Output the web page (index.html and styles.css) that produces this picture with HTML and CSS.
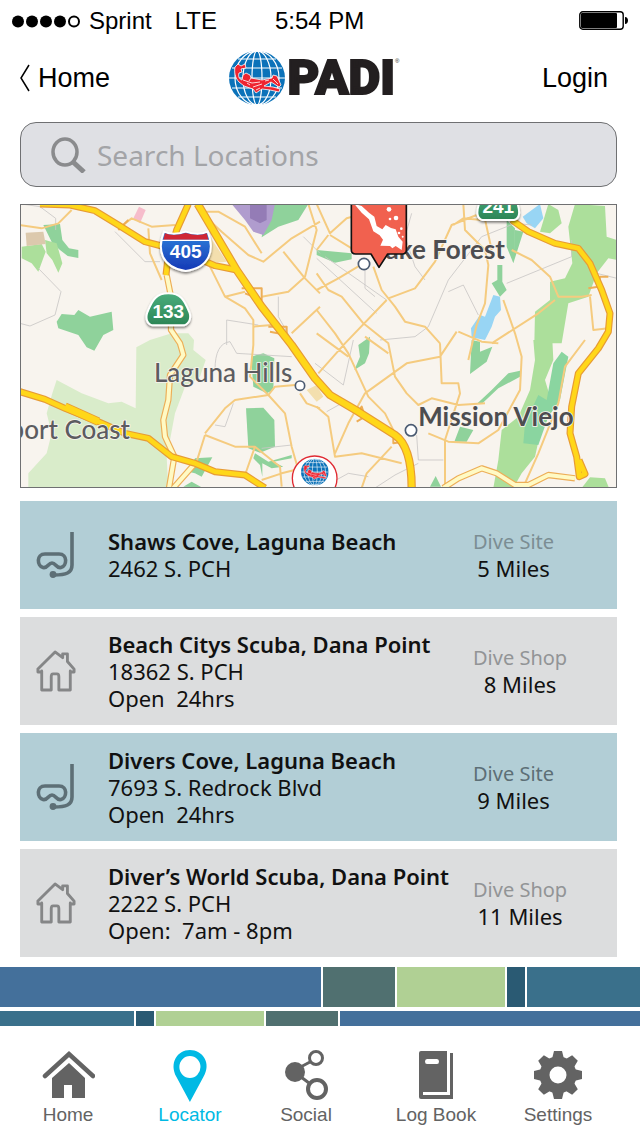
FILE: index.html
```html
<!DOCTYPE html>
<html lang="en">
<head>
<meta charset="utf-8">
<meta name="viewport" content="width=device-width, initial-scale=1">
<title>PADI Locator</title>
<link rel="stylesheet" href="styles.css">
</head>
<body>
<svg class="defs" aria-hidden="true">
  <defs>
    <symbol id="globe" viewBox="0 0 56 54">
      <ellipse cx="28" cy="27" rx="28" ry="27" fill="#0b72b9"/>
      <g fill="none" stroke="#fff" stroke-width="1.2">
        <ellipse cx="28" cy="27" rx="22" ry="27"/><ellipse cx="28" cy="27" rx="14" ry="27"/><ellipse cx="28" cy="27" rx="5" ry="27"/>
        <path d="M9 8H47M3 17H53M0 27H56M3 37H53M9 46H47"/>
      </g>
      <path d="M6 16L9 13L12 15L16 13L17 17L12 18L13 21L10 22C9 25 10 28 13 29L14 24L17 22L21 24L22 27L33 29L43 27L44 24L48 25L52 34L50 36L42 31L35 35L44 36L51 38L50 41L41 39L33 38L27 42L24 38L15 35L10 31C6 27 5 21 6 16Z" fill="#ee2430" stroke="#fff" stroke-width=".8"/>
      <path d="M14 29L23 32L31 31M18 32L21 34M24 36L33 33M22 27L20 30M44 28L49 33M27 39L31 37M36 30L40 29" fill="none" stroke="#fff" stroke-width=".8"/>
    </symbol>
    <symbol id="snorkel" viewBox="0 0 40 46">
      <g fill="none" stroke="currentColor" stroke-width="3.600">
        <path d="M36 0V33C36 41 30 43 18 43"/>
        <path d="M9 22H23C32 22 31 34 25 35.500C20 36.500 20 31 16 31S12 36.500 7 35.500C1 34 0 22 9 22Z"/>
      </g>
      <circle cx="17" cy="42.500" r="3.400" fill="currentColor"/>
    </symbol>
    <symbol id="shop" viewBox="0 0 42 44">
      <path d="M6 22V42H16V28Q16 25 18 25H22Q24 25 24 28V42H36V22M2 20L20 2L28 8V4H33V12L40 20V23H36M2 20V23H6" fill="none" stroke="currentColor" stroke-width="3" stroke-linejoin="round" stroke-linecap="round"/>
    </symbol>
  </defs>
</svg>

<div class="status">
  <svg class="signal" viewBox="0 0 68 13" aria-hidden="true">
    <g><circle cx="6" cy="6.500" r="6"/><circle cx="20" cy="6.500" r="6"/><circle cx="34" cy="6.500" r="6"/><circle cx="48" cy="6.500" r="6"/></g>
    <circle cx="62" cy="6.500" r="5" fill="none" stroke="#000" stroke-width="2"/>
  </svg>
  <span class="carrier">Sprint</span>
  <span class="network">LTE</span>
  <span class="clock">5:54 PM</span>
  <svg class="battery" viewBox="0 0 49 20" aria-label="Battery">
    <rect x=".8" y=".8" width="43.400" height="17.400" rx="3" fill="none" stroke="#000" stroke-width="1.400"/>
    <rect x="2" y="2" width="36" height="15" rx="1"/><path d="M46 6C50 6 50 13 46 13Z"/>
  </svg>
</div>

<header class="header">
  <a class="back" href="#home">
    <svg viewBox="0 0 10 28" aria-hidden="true"><path d="M9 1L1 14L9 27" fill="none" stroke="#000" stroke-width="1.500"/></svg>Home</a>
  <a class="brand" href="#padi"><svg class="brand-globe" aria-hidden="true"><use href="#globe"/></svg><span class="brand-name">PADI</span><span class="reg">®</span></a>
  <a class="login" href="#login">Login</a>
</header>

<main class="content">
  <form class="search">
    <svg viewBox="0 0 36 36" aria-hidden="true"><ellipse cx="14" cy="15" rx="12" ry="13" fill="none" stroke="#8a8b8d" stroke-width="3.500"/><path d="M21 24L33 35" stroke="#8a8b8d" stroke-width="5"/></svg>
    <input type="search" placeholder="Search Locations" aria-label="Search Locations">
  </form>

  <svg class="map" viewBox="18 15 1785 846" role="img" aria-label="Map of dive locations">
    <defs>
      <linearGradient id="blueShield" x2="0" y2="1"><stop stop-color="#2f83dc"/><stop offset="1" stop-color="#1537b5"/></linearGradient>
      <linearGradient id="greenShield" x2="0" y2="1"><stop stop-color="#4aad7c"/><stop offset="1" stop-color="#2c8556"/></linearGradient>
      <filter id="shadow" x="-20%" y="-20%" width="140%" height="150%"><feDropShadow dx="0" dy="5" stdDeviation="3" flood-opacity=".5"/></filter>
    </defs>
    <rect x="0" y="0" width="1820" height="880" fill="#f8f4ee"/>

    <!-- parks -->
    <path d="M364 442L405 420L470 400L520 400L537 420L535 450L572 480L555 530L510 560L480 640L465 720L455 770L460 870H40V820L95 760L110 700L95 640L112 580L125 540L200 580L280 610L320 605L362 625Z" fill="#d9ecca"/>
    <g fill="#8fd29b">
      <path d="M85 75L135 72L142 120L162 145L190 150V174L158 168L135 150L112 130Z"/>
      <path d="M125 365L140 342L178 345L190 330L225 350L290 335L295 390L265 405L238 452L215 442L190 405L130 385Z"/>
      <path d="M708 470L745 460L778 475L775 570L755 580L715 560Z"/>
      <path d="M693 625L745 623L778 660L780 740L735 758L700 745Z"/>
      <path d="M720 760L760 785L830 765V775L775 785L805 800L770 805L742 790V830L735 795L715 775ZM540 775L592 772L560 830L540 820L520 815ZM505 860L530 845L560 862Z"/>
      <path d="M760 12H880L850 60L790 80L740 112L748 60Z"/>
      <path d="M905 150L1010 160V178L960 188L905 165ZM1030 435L1065 410L1062 460L1050 490L1018 510L1035 470Z"/>
      <path d="M1475 60L1500 85L1495 190L1475 140ZM1500 90L1525 95L1495 190ZM1447 195H1462V245L1475 270L1455 290L1430 250L1447 240Z"/>
      <path d="M1370 420L1395 425V455L1432 440L1415 485L1365 522Z"/>
      <path d="M1385 612L1430 570L1480 520L1515 512V530L1450 565L1400 612ZM1335 680L1375 690L1355 725L1318 725ZM1245 860L1262 828L1278 860Z"/>
    </g>
    <g fill="#acdf9b">
      <path d="M20 140L80 132L92 155L70 215L50 190L20 175Z"/><path d="M90 120L125 130L142 190L130 218L112 180L95 160Z"/>
      <path d="M1680 12L1770 18L1775 110L1806 120V180L1780 175L1745 220L1720 290L1660 310L1640 430H1558L1560 335L1605 300V245L1650 235L1672 190L1660 80Z"/>
      <path d="M1600 12L1630 30L1640 70L1605 100L1575 95Z"/>
      <path d="M1555 420H1612L1615 480L1590 540L1605 590L1580 680L1560 770L1520 820L1495 864H1435L1450 780L1460 690L1510 650L1545 570L1560 480Z"/>
      <path d="M1700 864L1725 832L1770 835L1782 864Z"/>
    </g>
    <path d="M1615 490L1640 455L1660 470L1635 600L1600 650L1570 735L1525 730L1530 670L1570 585L1595 600Z" fill="#8ad5a0"/>
    <path d="M650 12H780L770 60L745 105L715 95L690 60Z" fill="#b09cce"/><path d="M705 12H755V60L735 70L705 55Z" fill="#947cb6"/>
    <path d="M32 98L85 95L92 132L35 138Z" fill="#dcc9ad"/><path d="M372 20L392 30L375 70L355 55Z" fill="#f6bccb"/>
    <path d="M585 110L635 185L580 190ZM875 570L905 555L925 590L905 605Z" fill="#f3dfae"/>
    <g fill="#98d5f4"><path d="M1523 50L1575 12L1585 55L1560 85L1535 70Z"/><path d="M1435 285L1455 290L1458 330L1440 350L1430 380L1410 420L1370 412L1368 385L1395 345L1410 350Z"/></g>

    <!-- local streets -->
    <g fill="none" stroke="#c9c7c5" stroke-width="2.500">
      <path d="M20 12L75 20L122 55V90M70 205L138 275L120 345L45 378L15 370M300 95L390 185H435M635 435V360L730 375M790 290V350L830 420M600 510Q600 430 645 425L665 460L830 470M600 675L630 680L655 610M740 745L830 735"/>
      <path d="M905 175L1085 340M930 170L1115 300M1050 200V265L1080 290M1190 40L1170 110L1200 200L1230 240M1240 380L1300 240L1400 110L1500 70L1550 75M1240 380L1200 410L1095 420M1390 345L1345 255L1300 275M1475 250L1670 170V120M900 490L985 555L1015 420M1205 705L1210 780H1285M935 635L980 610M1080 864L1140 825L1210 790"/>
      <path d="M1745 220L1806 235M920 864L1000 820L1060 830M865 110L915 160"/>
    </g>
    <g fill="none" stroke="#f5cb7f" stroke-width="6" stroke-linejoin="round">
      <path d="M15 75L80 85L130 70L170 30M310 85L350 55L410 80L480 75M400 85L405 160L440 240M560 40L620 95L700 165L745 185L830 115L915 65M570 35H610L690 80L740 160M880 12L905 90L870 230L820 275L740 290M585 200L630 290L690 325L715 360V435L705 530L760 585L810 640L830 740L850 810M630 290L690 275M805 155L870 235L915 280M715 380L770 375M830 400L915 320"/>
      <path d="M570 700L630 625L660 600L760 585L780 560L840 555M855 580L875 610L915 625M570 705L660 740H720L795 800L800 860M570 705L545 785M690 825L720 740M740 840L800 820L860 805"/>
      <path d="M905 12L945 100L995 55L1050 40M940 105L905 150M945 105L1010 145M905 270L970 235L1045 190M1075 200L1100 270L1140 320L1170 365L1230 380L1275 430M905 220L940 270L980 290L1045 370L1120 430L1140 530L1175 580L1210 615L1250 595L1330 615L1410 610M905 330L960 400L1000 460L1060 590L1110 640L1140 700M1115 300L990 430L910 520M1120 295L1200 265L1260 185L1310 75L1385 45M1315 75L1345 55L1400 60M1345 12L1350 90L1410 150L1420 195L1410 310L1385 375L1360 480M1490 150L1550 180L1605 230L1630 290L1700 290L1730 285M1620 300L1570 340L1430 430M1465 300L1500 400L1520 470L1515 570L1450 690L1390 730L1300 725L1240 700M1275 430L1280 550H1330L1335 580L1290 720V864M1325 395L1275 470L1175 490L1050 580L1000 670L960 760M1330 395L1400 425L1450 430M905 620L940 650L960 770L1040 760L1160 790M1040 864L1055 820L1130 740M1710 420L1650 500L1630 610L1570 760L1530 850M1725 290L1735 390L1780 385M905 400L1000 470M1050 410L1120 460M1400 12L1430 150"/>
    </g>

    <!-- freeways -->
    <g fill="none" stroke-linejoin="round">
      <path d="M455 225L468 290V390L495 430L505 465L465 525L460 600L445 660L450 710L478 770L462 864M475 864L545 785M1285 864L1330 835L1400 805L1445 820L1500 855H1540L1600 825L1680 835" stroke="#edae57" stroke-width="19"/>
      <path d="M455 225L468 290V390L495 430L505 465L465 525L460 600L445 660L450 710L478 770L462 864M475 864L545 785M1285 864L1330 835L1400 805L1445 820L1500 855H1540L1600 825L1680 835" stroke="#fffac4" stroke-width="12"/>
      <g stroke="#edae57" stroke-width="6"><path d="M680 265H740V300L690 280M760 380H815V405L765 395M1025 640L1040 620L1050 650L1025 665M1720 265L1750 260L1755 230H1780M310 90L340 60M1135 710V730L1165 725"/></g>
      <g stroke="#e79b35"><path d="M75 12L165 15L240 32L310 75L390 125L440 138L560 180L600 197L665 210M520 12L485 90L457 190L453 225M15 575L90 598L150 625L250 665L330 700L400 715L470 770L540 790L600 815L690 825L750 864M1490 60L1540 95L1620 130L1690 145L1725 190L1760 270L1785 340L1780 395L1750 445L1690 520L1670 620L1665 700L1685 770L1693 830L1710 822L1692 780" stroke-width="21"/><path d="M548 12L665 210L740 320L830 435L900 535L945 585L1030 635L1140 705Q1190 740 1190 864" stroke-width="25"/><path d="M150 620L250 665" stroke-width="26"/></g>
      <g stroke="#ffd719"><path d="M75 12L165 15L240 32L310 75L390 125L440 138L560 180L600 197L665 210M520 12L485 90L457 190L453 225M15 575L90 598L150 625L250 665L330 700L400 715L470 770L540 790L600 815L690 825L750 864M1490 60L1540 95L1620 130L1690 145L1725 190L1760 270L1785 340L1780 395L1750 445L1690 520L1670 620L1665 700L1685 770L1693 830L1710 822L1692 780" stroke-width="14"/><path d="M548 12L665 210L740 320L830 435L900 535L945 585L1030 635L1140 705Q1190 740 1190 864" stroke-width="18"/><path d="M150 620L250 665" stroke-width="21"/></g>
    </g>

    <!-- place names -->
    <g fill="#fff" stroke="#4b5b72" stroke-width="5"><circle cx="1047" cy="192" r="17"/><circle cx="855" cy="557" r="14"/><circle cx="1188" cy="691" r="17"/></g>
    <g class="places">
      <text x="1470" y="177" class="city">Lake Forest</text>
      <text x="1676" y="677" class="city">Mission Viejo</text>
      <text x="832" y="545" class="town">Laguna Hills</text>
      <text x="345" y="718" class="town">port Coast</text>
    </g>

    <!-- route shields -->
    <g filter="url(#shadow)">
      <path d="M447 95Q475 108 512 95Q550 108 578 95C600 150 585 202 512 213C440 202 425 150 447 95Z" fill="url(#blueShield)" stroke="#fff" stroke-width="6"/>
      <path d="M450 100Q475 110 512 99Q550 110 575 100L580 119H445Z" fill="#cf2536"/>
      <path d="M441 121H583" stroke="#fff" stroke-width="4"/>
      <path d="M412 376C393 370 390 350 400 330C412 300 424 280 460 280C497 280 508 300 520 330C531 350 525 370 507 376Z" fill="url(#greenShield)" stroke="#fff" stroke-width="6"/>
      <path d="M1402 60C1385 55 1384 36 1392 12L1410 -30H1490L1508 12C1515 36 1515 55 1497 60Z" fill="url(#greenShield)" stroke="#fff" stroke-width="6"/>
    </g>
    <g class="route"><text x="512" y="175">405</text><text x="460" y="354">133</text><text x="1450" y="38">241</text></g>

    <!-- dive pins -->
    <path d="M1009 0V150Q1009 162 1022 162H1068L1092 202L1118 162H1162Q1174 162 1174 150V0Z" fill="#f1614f" stroke="#111" stroke-width="5" stroke-linejoin="round"/>
    <g fill="#fff"><path d="M1018 12L1040 18L1062 38L1078 50L1085 78L1102 88L1112 75L1128 84L1142 88L1150 110L1163 125L1160 150L1142 138L1132 145L1125 138L1096 137L1104 119L1094 106L1075 94L1062 58L1040 38Z"/><circle cx="1122" cy="28" r="7"/><circle cx="1143" cy="54" r="7"/><circle cx="1125" cy="57" r="4"/><circle cx="1159" cy="86" r="4"/><circle cx="1152" cy="99" r="4"/><circle cx="1163" cy="110" r="3"/></g>
    <circle cx="899" cy="835" r="67" fill="#fff" stroke="#e02a32" stroke-width="4"/>
    <use href="#globe" x="858" y="775" width="83" height="82"/>
  </svg>

  <ul class="list">
    <li class="site"><a href="#shaws-cove">
      <svg class="icon" aria-hidden="true"><use href="#snorkel"/></svg>
      <span class="info"><strong>Shaws Cove, Laguna Beach</strong><span>2462 S. PCH</span></span>
      <span class="distance"><span class="kind">Dive Site</span><span>5 Miles</span></span></a></li>
    <li class="shop"><a href="#beach-citys">
      <svg class="icon" aria-hidden="true"><use href="#shop"/></svg>
      <span class="info"><strong>Beach Citys Scuba, Dana Point</strong><span>18362 S. PCH</span><span>Open&nbsp; 24hrs</span></span>
      <span class="distance"><span class="kind">Dive Shop</span><span>8 Miles</span></span></a></li>
    <li class="site"><a href="#divers-cove">
      <svg class="icon" aria-hidden="true"><use href="#snorkel"/></svg>
      <span class="info"><strong>Divers Cove, Laguna Beach</strong><span>7693 S. Redrock Blvd</span><span>Open&nbsp; 24hrs</span></span>
      <span class="distance"><span class="kind strong">Dive Site</span><span>9 Miles</span></span></a></li>
    <li class="shop"><a href="#divers-world">
      <svg class="icon" aria-hidden="true"><use href="#shop"/></svg>
      <span class="info"><strong>Diver’s World Scuba, Dana Point</strong><span>2222 S. PCH</span><span>Open:&nbsp; 7am - 8pm</span></span>
      <span class="distance"><span class="kind">Dive Shop</span><span>11 Miles</span></span></a></li>
  </ul>
</main>

<div class="bands" aria-hidden="true">
  <div class="band tall"><i class="blue"></i><i class="moss"></i><i class="lime"></i><i class="navy"></i><i class="teal"></i></div>
  <div class="band thin"><i class="teal"></i><i class="navy"></i><i class="lime"></i><i class="moss"></i><i class="blue"></i></div>
</div>

<nav class="tabs">
  <a href="#home"><svg viewBox="0 0 54 52" aria-hidden="true"><path d="M4 26L28 4L52 26" fill="none" stroke="currentColor" stroke-width="4.500" stroke-linecap="round" stroke-linejoin="miter"/><path d="M11 28L28 13L44 28V48H31V35H23V48H11Z" fill="currentColor"/></svg>Home</a>
  <a class="active" href="#locator" aria-current="page"><svg viewBox="0 0 54 52" aria-hidden="true"><path fill-rule="evenodd" d="M27 52L13 27C5 13 14 0 27 0S50 13 41 27ZM27 6A11 11 0 1 0 27 28A11 11 0 1 0 27 6Z" transform="translate(1 0) scale(.96 1)" fill="currentColor"/></svg>Locator</a>
  <a href="#social"><svg viewBox="0 0 54 52" aria-hidden="true"><g fill="none" stroke="currentColor" stroke-width="3"><path d="M14 21L31 12M14 21L30 33"/><circle cx="37" cy="8" r="6.500"/><circle cx="38" cy="39" r="9" stroke-width="4"/></g><circle cx="16" cy="22" r="10" fill="currentColor"/></svg>Social</a>
  <a href="#logbook"><svg viewBox="0 0 54 52" aria-hidden="true"><path fill-rule="evenodd" d="M12 1H38V42H14V45H41V3H44V49H12Q10 49 10 47V3Q10 1 12 1ZM18 9Q16 9 16 11.500T18 14H28Q30 14 30 11.500T28 9Z" fill="currentColor"/></svg>Log Book</a>
  <a href="#settings"><svg viewBox="0 0 54 52" aria-hidden="true"><circle cx="27" cy="25" r="13.500" fill="none" stroke="currentColor" stroke-width="10"/><g fill="currentColor"><path id="tooth" d="M21 9L23 1H31L33 9ZM21 41L23 49H31L33 41Z"/><use href="#tooth" transform="rotate(45 27 25)"/><use href="#tooth" transform="rotate(90 27 25)"/><use href="#tooth" transform="rotate(135 27 25)"/></g></svg>Settings</a>
</nav>
</body>
</html>
```
FILE: styles.css
```css
* { box-sizing: border-box; }
body {
  margin: 0;
  background: #fff;
  color: #000;
  font-family: "Liberation Sans", Arial, sans-serif;
}
a { color: inherit; text-decoration: none; }
svg { display: block; flex: none; }
.defs { position: absolute; width: 0; height: 0; }

.status {
  display: flex;
  align-items: center;
  height: 42px;
  padding: 0 12px;
  font-size: 24px;
  line-height: 28px;
}
.signal { width: 68px; height: 13px; margin-right: 9px; }
.network { margin-left: 23px; }
.clock { margin-left: 58px; }
.battery { width: 49px; height: 20px; margin-left: auto; }

.header {
  display: grid;
  grid-template-columns: 1fr auto 1fr;
  align-items: center;
  height: 72px;
  padding: 0 32px 0 20px;
  font-size: 27px;
}
.back { display: flex; align-items: center; gap: 8px; }
.back svg { width: 10px; height: 28px; }
.login { justify-self: end; }
.brand { display: flex; align-items: center; color: #231f20; }
.brand-globe { width: 56px; height: 54px; }
.brand-name {
  margin-left: 3px;
  font: 900 49px/54px Roboto, sans-serif;
  -webkit-text-stroke: 2px #231f20;
}
.reg { align-self: flex-start; font-size: 6px; line-height: 20px; }

.content { padding: 8px 23px 0 20px; }
.search {
  display: flex;
  align-items: center;
  gap: 10px;
  height: 65px;
  padding: 0 30px;
  border: 1px solid #6f7072;
  border-radius: 16px;
  background: #dfe0e4;
}
.search svg { width: 36px; height: 36px; }
.search input {
  flex: 1;
  min-width: 0;
  padding: 0;
  border: 0;
  outline: 0;
  background: none;
  color: #555;
  font: 28px/38px "Noto Sans", sans-serif;
}
.search input::placeholder { color: #a3a4a7; opacity: 1; }

.map { width: 100%; height: auto; margin-top: 17px; border: 1px solid #6f7072; }
.places { stroke: #f8f4ee; stroke-width: 5px; paint-order: stroke; font-family: Lato, sans-serif; text-anchor: end; }
.city { font-size: 78px; font-weight: 700; fill: #4d4d50; }
.town { font-size: 78px; font-weight: 500; fill: #5c5c60; }
.route { fill: #fff; font: 700 57px "Liberation Sans", Arial, sans-serif; text-anchor: middle; }

.list {
  display: grid;
  gap: 8px;
  margin: 13px 0 0;
  padding: 0;
  list-style: none;
  color: #111;
  font: 22px/27px "Noto Sans", sans-serif;
}
.list a {
  display: grid;
  grid-template-columns: 72px 1fr 144px;
  align-items: center;
  min-height: 108px;
  padding-left: 16px;
}
.site { background: #b2ced6; }
.shop { background: #dcddde; }
.icon { width: 40px; height: 46px; color: #5d6f76; }
.shop .icon { color: #858687; }
.info { display: grid; }
.info strong { font-weight: 600; }
.distance { display: grid; justify-self: start; text-align: center; }
.kind { color: #929496; font-size: 20px; }
.site .kind { color: #7b8d93; }
.site .strong { color: #5d6f76; }

.bands { display: grid; gap: 4px; margin-top: 10px; }
.band { display: grid; gap: 2px; }
.tall { height: 40px; grid-template-columns: 321fr 72fr 108fr 18fr 113fr; }
.thin { height: 15px; grid-template-columns: 134fr 18fr 108fr 72fr 300fr; }
.blue { background: #44709b; }
.moss { background: #507070; }
.lime { background: #b0d094; }
.navy { background: #2a5a73; }
.teal { background: #3a708b; }

.tabs {
  display: grid;
  grid-template-columns: 122fr 122fr 110fr 150fr 94fr;
  padding: 24px 35px 10px 7px;
  color: #636363;
  font-size: 19px;
  line-height: 26px;
}
.tabs a { display: grid; justify-items: center; white-space: nowrap; }
.tabs svg { width: 54px; height: 52px; }
.tabs .active { color: #00b9e4; }
```
